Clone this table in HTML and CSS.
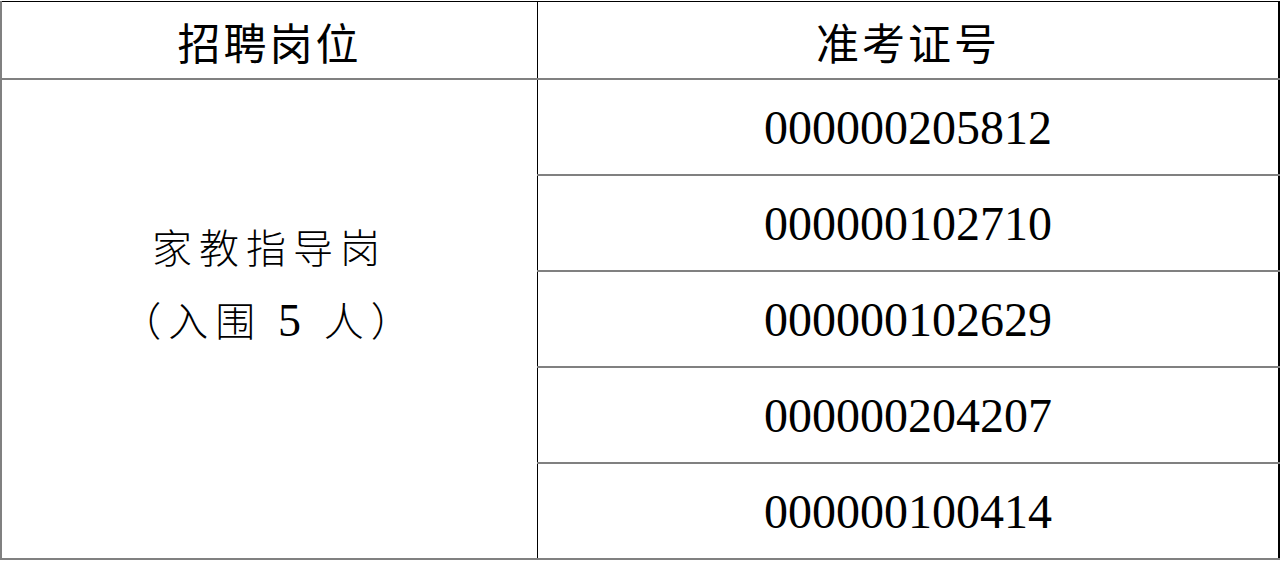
FILE: index.html
```html
<!DOCTYPE html>
<html lang="zh">
<head>
<meta charset="utf-8">
<link rel="stylesheet" href="styles.css">
</head>
<body>
<table class="list">
  <thead>
    <tr>
      <th class="col-post">招聘岗位</th>
      <th class="col-id">准考证号</th>
    </tr>
  </thead>
  <tbody>
    <tr>
      <td class="post" rowspan="5">
        <div class="post-name">家教指导岗</div>
        <div class="post-note">（入围 <span class="num">5</span> 人）</div>
      </td>
      <td class="id">000000205812</td>
    </tr>
    <tr><td class="id">000000102710</td></tr>
    <tr><td class="id">000000102629</td></tr>
    <tr><td class="id">000000204207</td></tr>
    <tr><td class="id">000000100414</td></tr>
  </tbody>
</table>
</body>
</html>
```

FILE: styles.css
```css
html, body {
  margin: 0;
  padding: 0;
  background: #fff;
}
body {
  padding-top: 1px;
}
.list {
  width: 1280px;
  border-collapse: collapse;
  table-layout: fixed;
  color: #000;
}
.list th, .list td {
  padding: 0;
  text-align: center;
  vertical-align: middle;
}
.col-post {
  width: 535px;
  border-top: 1px solid #000;
  border-left: 2px solid #808080;
  border-right: 1px solid #000;
  border-bottom: 2px solid #808080;
}
.col-id {
  border-top: 1px solid #000;
  border-right: 2px solid #000;
  border-bottom: 2px solid #808080;
}
.list th {
  height: 74px;
  font-family: "Noto Sans CJK SC", sans-serif;
  font-size: 43px;
  font-weight: 400;
  letter-spacing: 3px;
  padding-top: 2px;
}
.list td.post {
  border-left: 2px solid #808080;
  border-right: 1px solid #000;
  border-bottom: 2px solid #808080;
  font-family: "Noto Sans CJK SC", sans-serif;
  font-weight: 300;
  font-size: 40px;
  letter-spacing: 7px;
  padding-bottom: 72px;
}
.post-name {
  line-height: 73px;
}
.post-note {
  line-height: 73px;
}
.num {
  font-family: "Liberation Serif", serif;
  font-size: 46px;
}
.id {
  height: 94px;
  border-right: 2px solid #000;
  border-bottom: 2px solid #808080;
  font-family: "Liberation Serif", serif;
  font-size: 48px;
}
```
